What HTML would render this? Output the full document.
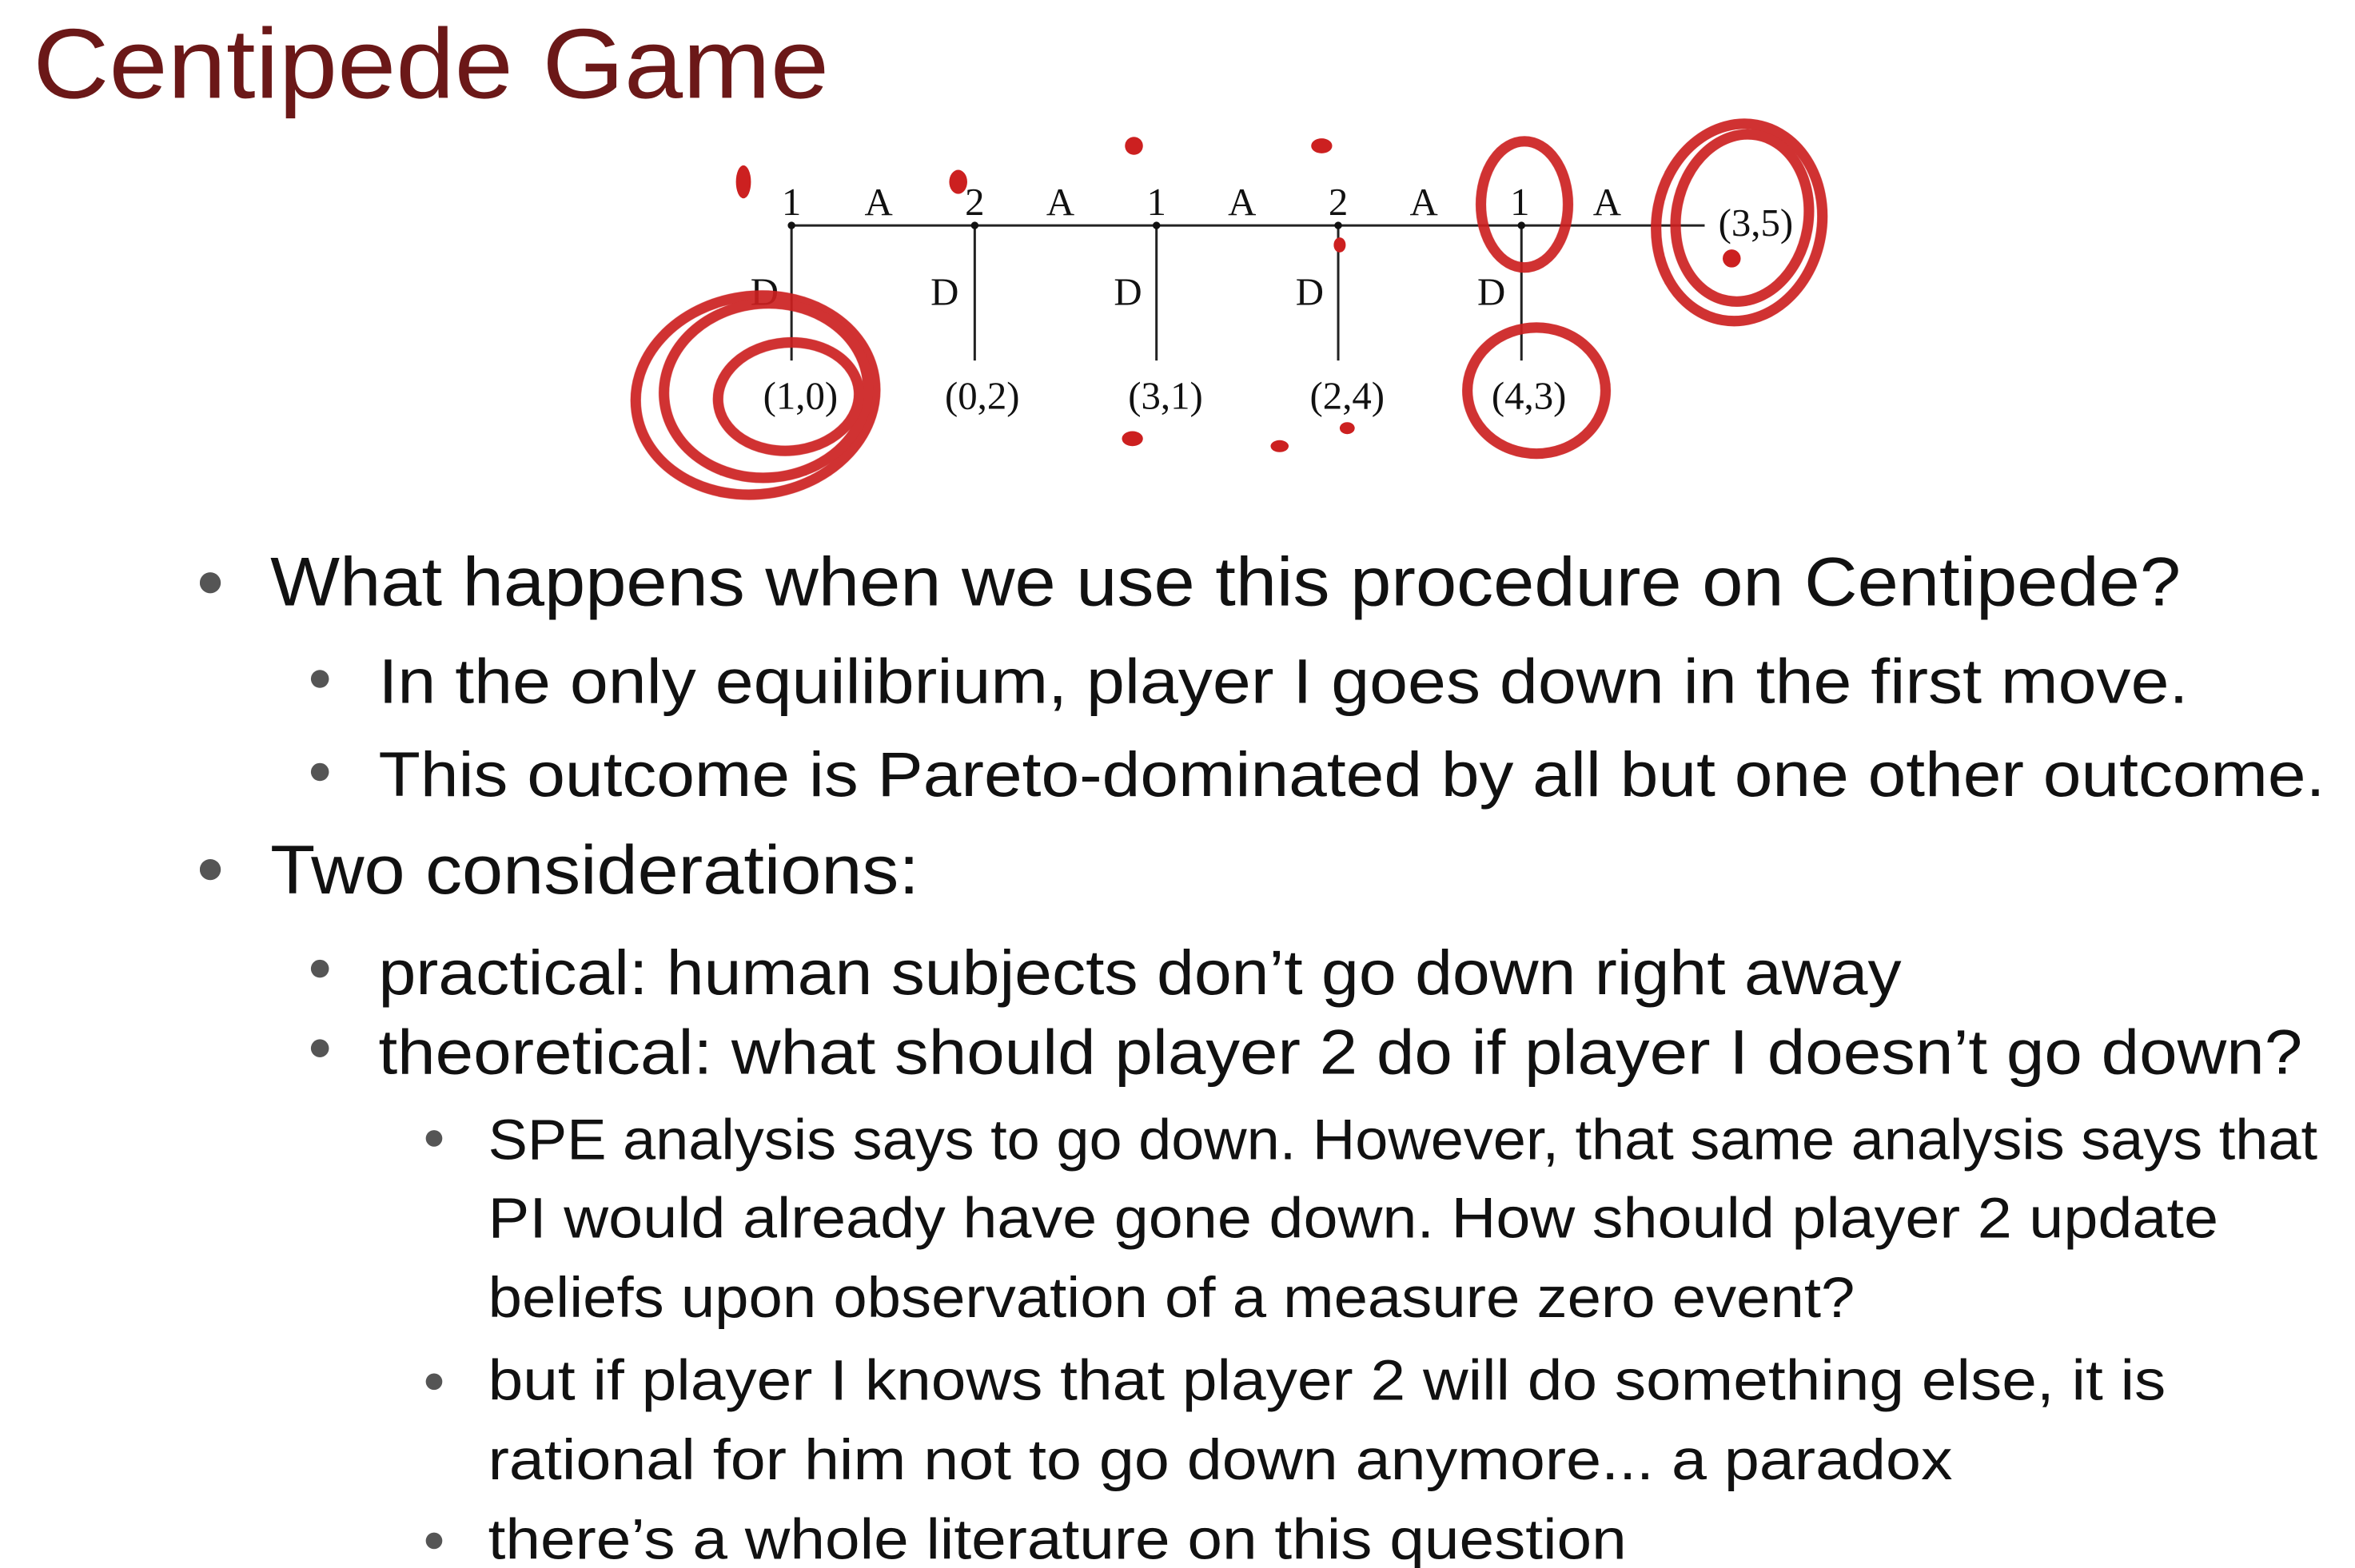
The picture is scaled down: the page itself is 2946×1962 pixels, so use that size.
<!DOCTYPE html>
<html><head><meta charset="utf-8"><style>html,body{margin:0;padding:0;background:#fff;overflow:hidden}svg{display:block}</style></head>
<body>
<svg width="2946" height="1962" viewBox="0 0 1568 1044" xmlns="http://www.w3.org/2000/svg">
<rect width="1568" height="1044" fill="#fff"/>
<text x="22" y="65" font-family="Liberation Sans, sans-serif" font-size="66" fill="#6b1818" textLength="530" lengthAdjust="spacingAndGlyphs">Centipede Game</text>
<g stroke="#222" stroke-width="1.6" fill="none">
<line x1="527" y1="150" x2="1135" y2="150"/>
<line x1="527" y1="150" x2="527" y2="240"/><line x1="649" y1="150" x2="649" y2="240"/><line x1="770" y1="150" x2="770" y2="240"/><line x1="891" y1="150" x2="891" y2="240"/><line x1="1013" y1="150" x2="1013" y2="240"/>
</g>
<g fill="#111"><circle cx="527" cy="150" r="2.5"/><circle cx="649" cy="150" r="2.5"/><circle cx="770" cy="150" r="2.5"/><circle cx="891" cy="150" r="2.5"/><circle cx="1013" cy="150" r="2.5"/></g>
<g font-family="Liberation Serif, serif" font-size="26" fill="#111" text-anchor="middle">
<text x="527" y="143">1</text><text x="585" y="143">A</text><text x="649" y="143">2</text><text x="706" y="143">A</text><text x="770" y="143">1</text><text x="827" y="143">A</text><text x="891" y="143">2</text><text x="948" y="143">A</text><text x="1012" y="143">1</text><text x="1070" y="143">A</text>
<text x="1169" y="157">(3,5)</text>
<text x="509" y="203">D</text><text x="629" y="203">D</text><text x="751" y="203">D</text><text x="872" y="203">D</text><text x="993" y="203">D</text>
<text x="533" y="272">(1,0)</text><text x="654" y="272">(0,2)</text><text x="776" y="272">(3,1)</text><text x="897" y="272">(2,4)</text><text x="1018" y="272">(4,3)</text>
</g>
<g stroke="#cc2020" stroke-width="7" fill="none" opacity="0.92">
<ellipse cx="503" cy="263" rx="80" ry="66" transform="rotate(-8 503 263)"/>
<ellipse cx="510" cy="260" rx="68" ry="58" transform="rotate(-5 510 260)"/>
<ellipse cx="525" cy="264" rx="47" ry="36" transform="rotate(-5 525 264)"/>
<ellipse cx="1015" cy="136" rx="29" ry="42"/>
<ellipse cx="1023" cy="260" rx="46" ry="42"/>
<ellipse cx="1158" cy="148" rx="55" ry="66" transform="rotate(10 1158 148)"/>
<ellipse cx="1160" cy="145" rx="44" ry="56" transform="rotate(10 1160 145)"/>
</g>
<g fill="#cc2020">
<ellipse cx="495" cy="121" rx="5" ry="11"/><ellipse cx="638" cy="121" rx="6" ry="8"/><ellipse cx="755" cy="97" rx="6" ry="6"/><ellipse cx="880" cy="97" rx="7" ry="5"/><ellipse cx="754" cy="292" rx="7" ry="5"/><ellipse cx="852" cy="297" rx="6" ry="4"/><ellipse cx="897" cy="285" rx="5" ry="4"/><ellipse cx="892" cy="163" rx="4" ry="5"/><ellipse cx="1153" cy="172" rx="6" ry="6"/>
</g>
<g fill="#555"><circle cx="140" cy="388" r="7"/><circle cx="213" cy="452" r="6"/><circle cx="213" cy="514" r="6"/><circle cx="140" cy="579" r="7"/><circle cx="213" cy="645" r="6"/><circle cx="213" cy="698" r="6"/><circle cx="289" cy="758" r="5.5"/><circle cx="289" cy="920" r="5.5"/><circle cx="289" cy="1026" r="5.5"/></g>
<g font-family="Liberation Sans, sans-serif" fill="#111">
<text x="180" y="403" font-size="46" textLength="1272" lengthAdjust="spacingAndGlyphs">What happens when we use this procedure on Centipede?</text>
<text x="252" y="468" font-size="42" textLength="1205" lengthAdjust="spacingAndGlyphs">In the only equilibrium, player I goes down in the first move.</text>
<text x="252" y="530" font-size="42" textLength="1296" lengthAdjust="spacingAndGlyphs">This outcome is Pareto-dominated by all but one other outcome.</text>
<text x="180" y="595" font-size="46" textLength="432" lengthAdjust="spacingAndGlyphs">Two considerations:</text>
<text x="252" y="662" font-size="42" textLength="1014" lengthAdjust="spacingAndGlyphs">practical: human subjects don’t go down right away</text>
<text x="252" y="715" font-size="42" textLength="1281" lengthAdjust="spacingAndGlyphs">theoretical: what should player 2 do if player I doesn’t go down?</text>
<text x="325" y="772" font-size="38" textLength="1218" lengthAdjust="spacingAndGlyphs">SPE analysis says to go down. However, that same analysis says that</text>
<text x="325" y="824" font-size="38" textLength="1152" lengthAdjust="spacingAndGlyphs">PI would already have gone down. How should player 2 update</text>
<text x="325" y="877" font-size="38" textLength="910" lengthAdjust="spacingAndGlyphs">beliefs upon observation of a measure zero event?</text>
<text x="325" y="932" font-size="38" textLength="1117" lengthAdjust="spacingAndGlyphs">but if player I knows that player 2 will do something else, it is</text>
<text x="325" y="985" font-size="38" textLength="975" lengthAdjust="spacingAndGlyphs">rational for him not to go down anymore... a paradox</text>
<text x="325" y="1038" font-size="38" textLength="758" lengthAdjust="spacingAndGlyphs">there’s a whole literature on this question</text>
</g>
</svg>
</body></html>
